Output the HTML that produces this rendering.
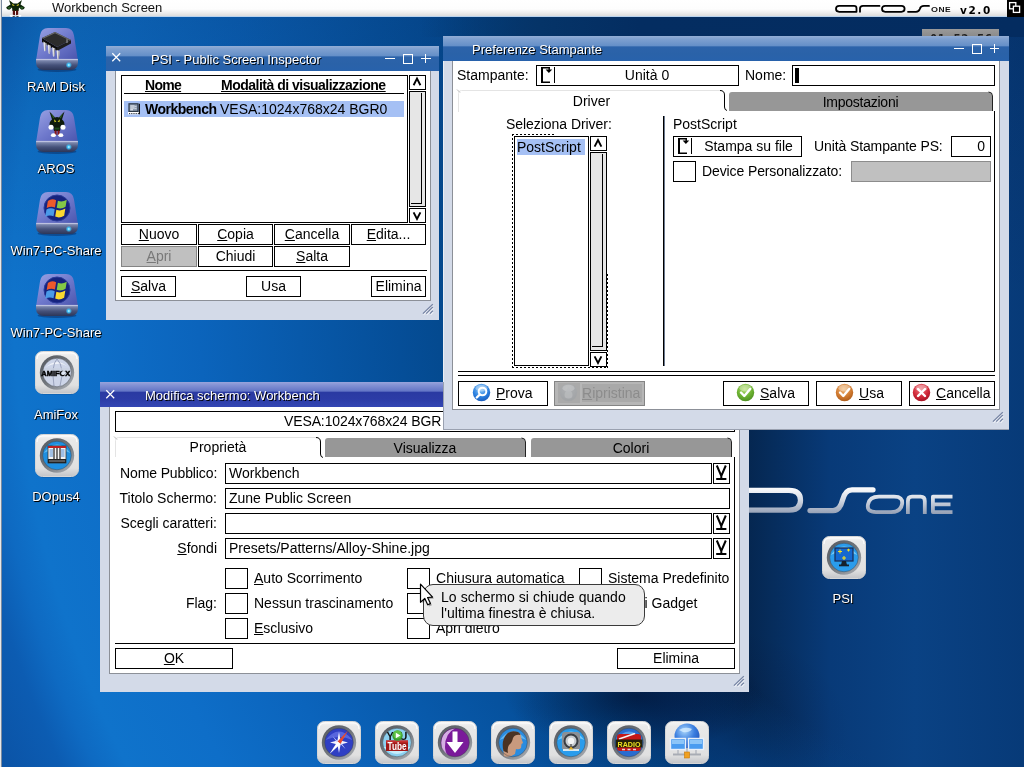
<!DOCTYPE html>
<html lang="it">
<head>
<meta charset="utf-8">
<title>Workbench Screen</title>
<style>
html,body{margin:0;padding:0;}
body{width:1024px;height:767px;overflow:hidden;position:relative;background:#0d4c9c;font-family:"Liberation Sans",sans-serif;font-size:14px;color:#000;line-height:16px;}
.a{position:absolute;box-sizing:border-box;}
.t{position:absolute;white-space:nowrap;line-height:16px;height:16px;}
.c{text-align:center;}
.r{text-align:right;}
u{text-decoration:underline;text-underline-offset:1px;text-decoration-thickness:1px;}
#bg{left:0;top:0;width:1024px;height:767px;
 background:radial-gradient(circle at 1056px 291px,rgba(7,53,110,0) 500px,#063f80 565px,#044a90 619px,#054e98 659px,#0859aa 758px,#0b64bc 858px,#0e6ec8 958px,#0f73cb 1043px,#0e6ac2 1072px,#0c5cb2 1102px,#0b52a4 1165px),
 linear-gradient(90deg,#093a78 380px,#083470 560px,#05264f 745px,#083a78 830px,#0a4284 915px,#073a78 1024px);}
#bgshade{left:0;top:0;width:1024px;height:767px;background:linear-gradient(90deg,rgba(5,52,104,0) 420px,#053468 540px,#042d61 640px,#042c60 1024px) 0 0/1024px 37px no-repeat,radial-gradient(ellipse 130px 55px at 635px 696px,rgba(0,6,30,0.55),rgba(0,6,30,0) 100%),radial-gradient(ellipse 170px 110px at 680px 730px,rgba(0,8,36,0.25),rgba(0,8,36,0) 100%),linear-gradient(180deg,rgba(0,16,50,0.17) 17px,rgba(0,16,50,0.09) 120px,rgba(0,16,50,0.0) 300px);}
#topbar{left:0;top:0;width:1007px;height:17px;background:linear-gradient(180deg,#ffffff 0,#fdfdfd 9px,#ececec 13px,#dcdcdc 16px,#b9d3ee 16px,#b9d3ee 17px);}
#topbar .t{font-size:13px;left:52px;top:0px;color:#111;}
#depth{left:1007px;top:0;width:17px;height:17px;background:#000;}
/* windows */
.win{background:#d3dae8;}
.tb{background:linear-gradient(180deg,#93aed6 0,#7ea0d0 3px,#6690c8 9.5px,#2c63aa 11px,#2a62a8 18px,#2862ac 25px);}
.tb.act{background:linear-gradient(180deg,#98a4dc 0,#8492d4 3px,#6476c6 9px,#2a3aa2 10.5px,#2c3ca6 17px,#3346b4 25px);}
.tt{position:absolute;white-space:nowrap;font-size:13px;color:#fff;text-shadow:1px 1px 0 #000;line-height:16px;top:4px;}
.cont{background:#fff;}
.b{position:absolute;box-sizing:border-box;border:1px solid #000;background:#fff;text-align:center;white-space:nowrap;line-height:16px;}
.dis{background:#c0c0c0;border-color:#848484;color:#787878;}
.hl{position:absolute;height:1px;background:#000;}
.vl{position:absolute;width:1px;background:#000;}
.g{position:absolute;}
.lbl{position:absolute;white-space:nowrap;color:#fff;font-size:13px;line-height:16px;text-align:center;text-shadow:1px 1px 0 #000,0 0 2px rgba(0,0,0,.6);}
</style>
</head>
<body>
<div id="root" style="position:absolute;left:0;top:0;width:1024px;height:767px;overflow:hidden;will-change:transform;">
<div id="bg" class="a"></div>
<div id="bgshade" class="a"></div>

<!-- TOPBAR -->
<div id="topbar" class="a"><span class="t">Workbench Screen</span></div>
<div class="a" style="left:0;top:0;width:2px;height:767px;background:linear-gradient(90deg,#e8e8e8 0,#e8e8e8 1px,#7a8aa0 1px,#7a8aa0 2px);"></div>
<svg class="a" style="left:5px;top:0px;" width="22" height="18" viewBox="0 0 22 18">
<path d="M4 0L8.5 3.5H12.5L17 0L15.5 4.5L19.8 7.2Q19.6 10 16.2 9.6L14 7.6L13.6 11H7.4L7 7.6L4.8 9.6Q1.4 10 1.2 7.2L5.5 4.5Z" fill="#0c2409"/>
<path d="M6.8 3.4L9.8 5.6L7.8 5.9ZM14.2 3.4L11.2 5.6L13.2 5.9Z" fill="#c8c030"/>
<ellipse cx="10.5" cy="0.5" rx="2" ry="1.1" fill="#fff"/>
<ellipse cx="4.2" cy="7.8" rx="1.6" ry="1" fill="#2a5c26"/><ellipse cx="16.8" cy="7.8" rx="1.6" ry="1" fill="#2a5c26"/>
<rect x="7.8" y="10.5" width="2.2" height="5" fill="#5a1010"/><rect x="11" y="10.5" width="2.2" height="5" fill="#5a1010"/>
<ellipse cx="7.3" cy="15.8" rx="2.8" ry="1.1" fill="#fff"/><ellipse cx="13.7" cy="15.8" rx="2.8" ry="1.1" fill="#fff"/>
<path d="M7.6 16.4H9.8M11.4 16.4H13.6" stroke="#222" stroke-width="0.9"/>
</svg>
<svg class="a" style="left:832px;top:2px;" width="100" height="14" viewBox="0 0 100 14">
<g fill="none" stroke="#000" stroke-width="1.8" stroke-linecap="round" stroke-linejoin="round">
<path d="M24.5 9.8V6.2Q24.5 3.9 22 3.9H7.2Q4 3.9 4 6.85Q4 9.8 7.2 9.8H24.5"/>
<path d="M28 9.8V6.6Q28 3.9 31 3.9H47.5"/>
<path d="M53.2 3.9H69.4Q72.6 3.9 72.6 6.85Q72.6 9.8 69.4 9.8H53.2Q50 9.8 50 6.85Q50 3.9 53.2 3.9Z"/>
<path d="M76 9.8H84Q87 9.8 87.8 7Q88.6 3.9 92 3.9H97"/>
</g></svg>
<span class="t" style="left:931px;top:4px;font-size:8px;font-weight:bold;line-height:12px;height:12px;letter-spacing:0.4px;color:#111;transform:scaleX(1.12);transform-origin:0 0;">O<span style="font-size:7.5px;">NE</span></span>
<span class="t" style="left:960px;top:2px;font-family:'DejaVu Sans','Liberation Sans',sans-serif;font-size:10.5px;font-weight:bold;line-height:16px;color:#000;letter-spacing:1.6px;">v2.0</span>
<div id="depth" class="a"></div>
<svg class="a" style="left:1007px;top:0px;" width="17" height="17" viewBox="0 0 17 17"><rect x="2.6" y="2.6" width="6.2" height="6.2" fill="#000" stroke="#fff" stroke-width="1.3"/><rect x="6.4" y="6.2" width="6.2" height="6.2" fill="#000" stroke="#fff" stroke-width="1.3"/></svg>

<!--ICONS-->
<svg class="a" style="left:34px;top:27px;" width="46" height="46" viewBox="0 0 46 46">
<defs><linearGradient id="dg1" x1="0" y1="0" x2="1" y2="1"><stop offset="0" stop-color="#9aa2e4"/><stop offset="0.5" stop-color="#6f79cc"/><stop offset="1" stop-color="#4a55ae"/></linearGradient>
<linearGradient id="db2" x1="0" y1="0" x2="0" y2="1"><stop offset="0" stop-color="#aab2d4"/><stop offset="0.2" stop-color="#7480a6"/><stop offset="0.55" stop-color="#46527a"/><stop offset="1" stop-color="#2c3658"/></linearGradient>
<radialGradient id="dl3"><stop offset="0" stop-color="#e0ffff"/><stop offset="0.4" stop-color="#40c8ff"/><stop offset="1" stop-color="#40c8ff" stop-opacity="0"/></radialGradient></defs>
<ellipse cx="23" cy="42.6" rx="19.5" ry="2.4" fill="#0a2a60" opacity="0.5"/>
<path d="M2.2 32.5L6 8.5Q7 1 14 1H32Q39 1 40 8.5L43.8 32.5Z" fill="url(#dg1)"/>
<path d="M2 32H44V35Q44 43 36 43H10Q2 43 2 35Z" fill="url(#db2)"/><path d="M2.3 32.4H43.7" stroke="#c4cae4" stroke-width="0.9"/>
<circle cx="34.8" cy="38" r="3.2" fill="url(#dl3)"/>
<path d="M8 11L23 20V24L8 15Z" fill="#0c0c0c"/><path d="M23 20L37 13V16.5L23 24Z" fill="#1e1e1e"/><path d="M9.3 14.6L12.5 16.4L11.6 23.6Q10.8 25.2 10.1 23.6Z" fill="#e4e4e8"/><path d="M11.3 15.8L12.5 16.4L11.6 23.6L11.0 24.2Z" fill="#8a8a94"/><path d="M13.7 17.3L16.9 19.1L16.0 26.3Q15.2 27.9 14.5 26.3Z" fill="#e4e4e8"/><path d="M15.7 18.5L16.9 19.1L16.0 26.3L15.4 26.9Z" fill="#8a8a94"/><path d="M18.1 20.0L21.3 21.8L20.4 29.0Q19.6 30.6 18.9 29.0Z" fill="#e4e4e8"/><path d="M20.1 21.2L21.3 21.8L20.4 29.0L19.8 29.6Z" fill="#8a8a94"/><path d="M22.5 22.7L25.7 24.5L24.8 31.7Q24.0 33.3 23.3 31.7Z" fill="#e4e4e8"/><path d="M24.5 23.9L25.7 24.5L24.8 31.7L24.2 32.3Z" fill="#8a8a94"/><path d="M8 11L21 5L37 13L23 20Z" fill="#2c2c2c"/><path d="M21 5L37 13L36 13.6L21 6.2L9.5 11.5L8 11Z" fill="#6a6a6a"/><path d="M33 12.2V16" stroke="#c8c8c8" stroke-width="0.8"/>
</svg>
<span class="lbl" style="left:-4px;top:79px;width:120px;">RAM Disk</span>
<svg class="a" style="left:34px;top:109px;" width="46" height="46" viewBox="0 0 46 46">
<defs><linearGradient id="dg4" x1="0" y1="0" x2="1" y2="1"><stop offset="0" stop-color="#9aa2e4"/><stop offset="0.5" stop-color="#6f79cc"/><stop offset="1" stop-color="#4a55ae"/></linearGradient>
<linearGradient id="db5" x1="0" y1="0" x2="0" y2="1"><stop offset="0" stop-color="#aab2d4"/><stop offset="0.2" stop-color="#7480a6"/><stop offset="0.55" stop-color="#46527a"/><stop offset="1" stop-color="#2c3658"/></linearGradient>
<radialGradient id="dl6"><stop offset="0" stop-color="#e0ffff"/><stop offset="0.4" stop-color="#40c8ff"/><stop offset="1" stop-color="#40c8ff" stop-opacity="0"/></radialGradient></defs>
<ellipse cx="23" cy="42.6" rx="19.5" ry="2.4" fill="#0a2a60" opacity="0.5"/>
<path d="M2.2 32.5L6 8.5Q7 1 14 1H32Q39 1 40 8.5L43.8 32.5Z" fill="url(#dg4)"/>
<path d="M2 32H44V35Q44 43 36 43H10Q2 43 2 35Z" fill="url(#db5)"/><path d="M2.3 32.4H43.7" stroke="#c4cae4" stroke-width="0.9"/>
<circle cx="34.8" cy="38" r="3.2" fill="url(#dl6)"/>
<path d="M15.5 2.5L21 8.5Q23 7.5 25 8.5L30.5 2.5L28 10.5Q31.5 13 30 17.5L27 16L26 22H20L19 16L16 17.5Q14.5 13 18 10.5Z" fill="#0e1a0c"/>
<path d="M16.8 4L20.6 8.2L19.2 9.6ZM29.2 4L25.4 8.2L26.8 9.6Z" fill="#2c5a24"/>
<path d="M20 10.2L22.4 12.6L20.6 13.2ZM26 10.2L23.6 12.6L25.4 13.2Z" fill="#d8d028"/>
<rect x="20.5" y="18.6" width="5" height="2" fill="#1e4a1c"/>
<circle cx="17" cy="18.3" r="2.5" fill="#fff"/><circle cx="29" cy="18.3" r="2.5" fill="#fff"/>
<rect x="20.6" y="21.5" width="2" height="4.5" fill="#8a1414"/><rect x="23.6" y="21.5" width="2" height="4.5" fill="#8a1414"/>
<ellipse cx="19.4" cy="26.2" rx="2.5" ry="1.9" fill="#fff"/><ellipse cx="26.8" cy="26.2" rx="2.5" ry="1.9" fill="#fff"/>
</svg>
<span class="lbl" style="left:-4px;top:161px;width:120px;">AROS</span>
<svg class="a" style="left:34px;top:191px;" width="46" height="46" viewBox="0 0 46 46">
<defs><linearGradient id="dg7" x1="0" y1="0" x2="1" y2="1"><stop offset="0" stop-color="#9aa2e4"/><stop offset="0.5" stop-color="#6f79cc"/><stop offset="1" stop-color="#4a55ae"/></linearGradient>
<linearGradient id="db8" x1="0" y1="0" x2="0" y2="1"><stop offset="0" stop-color="#aab2d4"/><stop offset="0.2" stop-color="#7480a6"/><stop offset="0.55" stop-color="#46527a"/><stop offset="1" stop-color="#2c3658"/></linearGradient>
<radialGradient id="dl9"><stop offset="0" stop-color="#e0ffff"/><stop offset="0.4" stop-color="#40c8ff"/><stop offset="1" stop-color="#40c8ff" stop-opacity="0"/></radialGradient></defs>
<ellipse cx="23" cy="42.6" rx="19.5" ry="2.4" fill="#0a2a60" opacity="0.5"/>
<path d="M2.2 32.5L6 8.5Q7 1 14 1H32Q39 1 40 8.5L43.8 32.5Z" fill="url(#dg7)"/>
<path d="M2 32H44V35Q44 43 36 43H10Q2 43 2 35Z" fill="url(#db8)"/><path d="M2.3 32.4H43.7" stroke="#c4cae4" stroke-width="0.9"/>
<circle cx="34.8" cy="38" r="3.2" fill="url(#dl9)"/>
<circle cx="23" cy="17" r="13" fill="#16237e"/><circle cx="23" cy="17" r="13" fill="none" stroke="#2a3a9a" stroke-width="1"/>
<g transform="translate(22.6 17) scale(1.18) translate(-22.4 -17)"><path d="M15 11Q18.5 8.5 22 10.5L21 16.5Q17.5 15 14 17Z" fill="#ee5a2c"/>
<path d="M23.5 10.8Q27 12.5 31 10L30 16Q26.5 18.5 22.5 16.8Z" fill="#84c846"/>
<path d="M13.8 18.3Q17.3 16.3 20.8 18L19.8 24Q16.3 22.3 12.8 24.5Z" fill="#4a9ae8"/>
<path d="M22.2 18.4Q26 20 29.8 17.5L28.8 23.5Q25 26 21.2 24.3Z" fill="#fad830"/></g>
</svg>
<span class="lbl" style="left:-4px;top:243px;width:120px;">Win7-PC-Share</span>
<svg class="a" style="left:34px;top:273px;" width="46" height="46" viewBox="0 0 46 46">
<defs><linearGradient id="dg10" x1="0" y1="0" x2="1" y2="1"><stop offset="0" stop-color="#9aa2e4"/><stop offset="0.5" stop-color="#6f79cc"/><stop offset="1" stop-color="#4a55ae"/></linearGradient>
<linearGradient id="db11" x1="0" y1="0" x2="0" y2="1"><stop offset="0" stop-color="#aab2d4"/><stop offset="0.2" stop-color="#7480a6"/><stop offset="0.55" stop-color="#46527a"/><stop offset="1" stop-color="#2c3658"/></linearGradient>
<radialGradient id="dl12"><stop offset="0" stop-color="#e0ffff"/><stop offset="0.4" stop-color="#40c8ff"/><stop offset="1" stop-color="#40c8ff" stop-opacity="0"/></radialGradient></defs>
<ellipse cx="23" cy="42.6" rx="19.5" ry="2.4" fill="#0a2a60" opacity="0.5"/>
<path d="M2.2 32.5L6 8.5Q7 1 14 1H32Q39 1 40 8.5L43.8 32.5Z" fill="url(#dg10)"/>
<path d="M2 32H44V35Q44 43 36 43H10Q2 43 2 35Z" fill="url(#db11)"/><path d="M2.3 32.4H43.7" stroke="#c4cae4" stroke-width="0.9"/>
<circle cx="34.8" cy="38" r="3.2" fill="url(#dl12)"/>
<circle cx="23" cy="17" r="13" fill="#16237e"/><circle cx="23" cy="17" r="13" fill="none" stroke="#2a3a9a" stroke-width="1"/>
<g transform="translate(22.6 17) scale(1.18) translate(-22.4 -17)"><path d="M15 11Q18.5 8.5 22 10.5L21 16.5Q17.5 15 14 17Z" fill="#ee5a2c"/>
<path d="M23.5 10.8Q27 12.5 31 10L30 16Q26.5 18.5 22.5 16.8Z" fill="#84c846"/>
<path d="M13.8 18.3Q17.3 16.3 20.8 18L19.8 24Q16.3 22.3 12.8 24.5Z" fill="#4a9ae8"/>
<path d="M22.2 18.4Q26 20 29.8 17.5L28.8 23.5Q25 26 21.2 24.3Z" fill="#fad830"/></g>
</svg>
<span class="lbl" style="left:-4px;top:325px;width:120px;">Win7-PC-Share</span>
<svg class="a" style="left:35px;top:351px;" width="44" height="44" viewBox="0 0 44 44">
<defs><linearGradient id="tg13" x1="0" y1="0" x2="0" y2="1"><stop offset="0" stop-color="#f6f6f6"/><stop offset="0.12" stop-color="#e9e9e9"/><stop offset="0.8" stop-color="#e0e0e0"/><stop offset="1" stop-color="#c2c4c8"/></linearGradient>
<linearGradient id="rg14" x1="0.15" y1="0.1" x2="0.85" y2="0.9"><stop offset="0" stop-color="#5c6066"/><stop offset="0.5" stop-color="#70757b"/><stop offset="1" stop-color="#a2a6ac"/></linearGradient></defs>
<rect x="1" y="1.6" width="42.4" height="42" rx="7" ry="7" fill="#0a2a5c" opacity="0.35"/>
<rect x="0.5" y="0.5" width="43" height="42" rx="7" ry="7" fill="url(#tg13)" stroke="#d6d6d6"/>
<path d="M2 8Q2 2 8 2H36Q42 2 42 8" stroke="#ffffff" stroke-width="1.2" fill="none" opacity="0.9"/>
<circle cx="22" cy="21.5" r="17.2" fill="url(#rg14)"/>
<circle cx="22" cy="21.5" r="14.3" fill="#cdd5e8"/><path d="M10 17Q22 5 34 17Q28 12 22 13Q15 13 10 17Z" fill="#eef1f8"/>
<path d="M22 8Q16 14 19 35M22 8Q30 16 25 35" stroke="#8e97b2" stroke-width="0.8" fill="none"/>
<rect x="9" y="17" width="26" height="8" fill="#c9d0e0" opacity="0.7"/>
<text x="20.8" y="24.8" font-family="Liberation Sans, sans-serif" font-weight="bold" font-size="8" text-anchor="middle" fill="#000" stroke="#000" stroke-width="0.5" textLength="29" lengthAdjust="spacingAndGlyphs">AMIFOX</text><circle cx="28.4" cy="21.9" r="2" fill="#dfe6f4"/>
<circle cx="22" cy="21.5" r="14.3" fill="none" stroke="#3a3e44" stroke-width="0.7" opacity="0.6"/>
</svg>
<span class="lbl" style="left:-4px;top:407px;width:120px;">AmiFox</span>
<svg class="a" style="left:35px;top:434px;" width="44" height="44" viewBox="0 0 44 44">
<defs><linearGradient id="tg15" x1="0" y1="0" x2="0" y2="1"><stop offset="0" stop-color="#f6f6f6"/><stop offset="0.12" stop-color="#e9e9e9"/><stop offset="0.8" stop-color="#e0e0e0"/><stop offset="1" stop-color="#c2c4c8"/></linearGradient>
<linearGradient id="rg16" x1="0.15" y1="0.1" x2="0.85" y2="0.9"><stop offset="0" stop-color="#5c6066"/><stop offset="0.5" stop-color="#70757b"/><stop offset="1" stop-color="#a2a6ac"/></linearGradient></defs>
<rect x="1" y="1.6" width="42.4" height="42" rx="7" ry="7" fill="#0a2a5c" opacity="0.35"/>
<rect x="0.5" y="0.5" width="43" height="42" rx="7" ry="7" fill="url(#tg15)" stroke="#d6d6d6"/>
<path d="M2 8Q2 2 8 2H36Q42 2 42 8" stroke="#ffffff" stroke-width="1.2" fill="none" opacity="0.9"/>
<circle cx="22" cy="21.5" r="17.2" fill="url(#rg16)"/>
<circle cx="22" cy="21.5" r="14.3" fill="#1f8fe0"/><path d="M8.5 19Q22 2 35.5 19Q22 12 8.5 19Z" fill="#6cc4f4" opacity="0.8"/>
<rect x="13" y="12" width="18" height="17" fill="#f4f4f4" stroke="#333" stroke-width="0.8"/><rect x="13" y="12" width="18" height="2" fill="#c02020"/>
<path d="M19 14V25M22 14V25M25 14V25" stroke="#222" stroke-width="1.2"/><path d="M14.5 16H18M14.5 18H18M14.5 20H18M14.5 22H18M26 16H29.5M26 18H29.5M26 20H29.5M26 22H29.5" stroke="#3a80d0" stroke-width="0.9"/>
<rect x="13" y="25" width="18" height="4" fill="#222"/><path d="M14.5 27H29.5" stroke="#fff" stroke-width="1" stroke-dasharray="1 1"/>
<circle cx="22" cy="21.5" r="14.3" fill="none" stroke="#3a3e44" stroke-width="0.7" opacity="0.6"/>
</svg>
<span class="lbl" style="left:-4px;top:489px;width:120px;">DOpus4</span>
<svg class="a" style="left:822px;top:536px;" width="44" height="44" viewBox="0 0 44 44">
<defs><linearGradient id="tg17" x1="0" y1="0" x2="0" y2="1"><stop offset="0" stop-color="#f6f6f6"/><stop offset="0.12" stop-color="#e9e9e9"/><stop offset="0.8" stop-color="#e0e0e0"/><stop offset="1" stop-color="#c2c4c8"/></linearGradient>
<linearGradient id="rg18" x1="0.15" y1="0.1" x2="0.85" y2="0.9"><stop offset="0" stop-color="#5c6066"/><stop offset="0.5" stop-color="#70757b"/><stop offset="1" stop-color="#a2a6ac"/></linearGradient></defs>
<rect x="1" y="1.6" width="42.4" height="42" rx="7" ry="7" fill="#0a2a5c" opacity="0.35"/>
<rect x="0.5" y="0.5" width="43" height="42" rx="7" ry="7" fill="url(#tg17)" stroke="#d6d6d6"/>
<path d="M2 8Q2 2 8 2H36Q42 2 42 8" stroke="#ffffff" stroke-width="1.2" fill="none" opacity="0.9"/>
<circle cx="22" cy="21.5" r="17.2" fill="url(#rg18)"/>
<circle cx="22" cy="21.5" r="14.3" fill="#2a9cec"/><path d="M8.5 19Q22 2 35.5 19Q22 12 8.5 19Z" fill="#8ad4fa" opacity="0.8"/>
<rect x="13" y="12" width="18" height="13" fill="#1468d0" stroke="#1a2a50" stroke-width="1.2"/>
<path d="M19 29H25L24 25H20Z" fill="#16202c"/><rect x="17" y="28.5" width="10" height="1.8" fill="#16202c"/>
<path d="M16 15.5H20M18 13.5V17.5M25 14H28M26.5 12.7V15.5M20 22H24M22 20V24" stroke="#f4e020" stroke-width="1.1"/>
<circle cx="22" cy="21.5" r="14.3" fill="none" stroke="#3a3e44" stroke-width="0.7" opacity="0.6"/>
</svg>
<span class="lbl" style="left:783px;top:591px;width:120px;">PSI</span>

<!--CLOCK-->
<div class="a" style="left:922px;top:29px;width:77px;height:14px;background:linear-gradient(180deg,#9a9a9a,#7c7c7c);"></div>
<span class="t" style="left:930px;top:31px;font-family:'DejaVu Sans Mono','Liberation Mono',monospace;font-weight:bold;font-size:12px;color:#222;letter-spacing:0.6px;">01:52:56</span>
<!--LOGO-->
<svg class="a" style="left:740px;top:481px;" width="220" height="40" viewBox="0 0 220 40">
<defs><linearGradient id="lg1" gradientUnits="userSpaceOnUse" x1="0" y1="6" x2="0" y2="34"><stop offset="0" stop-color="#ffffff"/><stop offset="0.45" stop-color="#d4dae4"/><stop offset="1" stop-color="#8e9ab0"/></linearGradient></defs>
<g fill="none" stroke="url(#lg1)" stroke-linecap="round" stroke-linejoin="round">
<path d="M-40 9.4H49Q60.5 9.4 60.5 19.3Q60.5 29.2 49 29.2H-40" stroke-width="5.3"/>
<path d="M70 29.6H93Q100 29.6 102.5 19.2Q105 8.8 112 8.8H133" stroke-width="5.3"/>
<path d="M139 15.7H154Q163.5 15.7 162 23.4Q160.5 31.1 151 31.1H136Q126.5 31.1 128 23.4Q129.5 15.7 139 15.7Z" stroke-width="3.8"/>
<path d="M167.9 33V20Q167.9 15.7 172 15.7H180.6Q184.8 15.7 184.8 20V33" stroke-width="3.8" stroke-linecap="butt"/>
<path d="M212.5 15.7H192.9V31.1H212.5M192.9 23.4H210.5" stroke-width="3.8" stroke-linecap="butt"/>
</g></svg>

<!--PSI-->
<div class="a win" style="left:106px;top:47px;width:333px;height:273px;"></div>
<div class="a tb" style="left:106px;top:46px;width:333px;height:25px;"></div>
<svg class="a" style="left:106px;top:47px;" width="334" height="24" viewBox="0 0 334 24"><g stroke="#fff" stroke-width="1" fill="none" shape-rendering="crispEdges"><path d="M6.3 6.3L14.2 14.2M14.2 6.3L6.3 14.2" shape-rendering="auto" stroke-width="1.25"/><path d="M279 11.5H289M297.5 7.5H306.5V16.5H297.5ZM315 11.5H325M319.5 7V16"/></g></svg>
<span class="tt" style="left:151px;top:52px;">PSI - Public Screen Inspector</span>
<div class="a cont" style="left:115px;top:71px;width:316px;height:230px;border-left:1px solid #8c9098;border-bottom:1px solid #8c9098;border-right:1px solid #8c9098;"></div>
<div class="a" style="left:121px;top:75px;width:287px;height:148px;border:1px solid #000;background:#fff;"></div>
<span class="t" style="left:145px;top:77px;font-weight:bold;letter-spacing:-0.7px;"><u>Nome</u></span>
<span class="t" style="left:221px;top:77px;font-weight:bold;letter-spacing:-0.5px;"><u>Modalità di visualizzazione</u></span>
<div class="hl" style="left:124px;top:93px;width:280px;"></div>
<div class="a" style="left:124px;top:101px;width:280px;height:16px;background:#a5c0f4;"></div>
<svg class="a" style="left:128px;top:103px;" width="13" height="12" viewBox="0 0 13 12"><rect x="0" y="9" width="11" height="2.4" fill="#fff"/><rect x="1" y="0.8" width="9" height="7.6" fill="#8e9cae" stroke="#2c3846" stroke-width="1.2"/><path d="M2.3 3H6.5M2.3 5H6.5M2.3 6.8H5" stroke="#f4f6fa" stroke-width="1"/><path d="M6.5 3.6H8.6M6.5 5.6H8.6" stroke="#dfe5ee" stroke-width="0.8"/><path d="M11.4 0.8V11.2" stroke="#0a0a0a" stroke-width="1.1"/><path d="M1 10.6H11" stroke="#1e2630" stroke-width="1" stroke-dasharray="1.2 1"/></svg>
<span class="t" style="left:145px;top:101px;font-weight:bold;letter-spacing:-0.5px;">Workbench</span>
<span class="t" style="left:220px;top:101px;">VESA:1024x768x24 BGR0</span>
<!-- psi scrollbar -->
<div class="b" style="left:409px;top:75px;width:17px;height:15px;"></div>
<svg class="a" style="left:409px;top:75px;" width="17" height="15"><path d="M4.6 10.2L8 3.6L11.4 10.2" stroke="#000" stroke-width="1.9" fill="none"/></svg>
<div class="b" style="left:409px;top:91px;width:17px;height:116px;background:#e6e6e6;"></div>
<div class="a" style="left:411px;top:93px;width:11px;height:111px;border-right:1px solid #000;border-bottom:1px solid #000;"></div>
<div class="b" style="left:409px;top:208px;width:17px;height:15px;"></div>
<svg class="a" style="left:409px;top:208px;" width="17" height="15"><path d="M4.6 4.4L8 11L11.4 4.4" stroke="#000" stroke-width="1.9" fill="none"/></svg>
<!-- psi buttons -->
<div class="b" style="left:121px;top:224px;width:76px;height:21px;line-height:19px;"><u>N</u>uovo</div>
<div class="b" style="left:198px;top:224px;width:75px;height:21px;line-height:19px;"><u>C</u>opia</div>
<div class="b" style="left:274px;top:224px;width:76px;height:21px;line-height:19px;"><u>C</u>ancella</div>
<div class="b" style="left:351px;top:224px;width:75px;height:21px;line-height:19px;"><u>E</u>dita...</div>
<div class="b dis" style="left:121px;top:246px;width:76px;height:21px;line-height:19px;"><u>A</u>pri</div>
<div class="b" style="left:198px;top:246px;width:75px;height:21px;line-height:19px;">Chiudi</div>
<div class="b" style="left:274px;top:246px;width:76px;height:21px;line-height:19px;"><u>S</u>alta</div>
<div class="hl" style="left:120px;top:270px;width:307px;"></div>
<div class="b" style="left:121px;top:276px;width:55px;height:21px;line-height:19px;"><u>S</u>alva</div>
<div class="b" style="left:246px;top:276px;width:55px;height:21px;line-height:19px;">Usa</div>
<div class="b" style="left:371px;top:276px;width:55px;height:21px;line-height:19px;">Elimina</div>
<svg class="a" style="left:420px;top:303px;" width="14" height="14"><path d="M3.6 11.6L13.2 2.2M6.9 11.6L13.2 5M10.7 11.6L13.2 8.8" stroke="#f4f6fa" stroke-width="1.2"/><path d="M2.9 10.6L12.8 1.2M6.2 10.6L12.8 4M10 10.6L12.8 7.8" stroke="#7684a4" stroke-width="1.3"/></svg>

<!--MOD-->
<div class="a win" style="left:100px;top:382px;width:649px;height:310px;"></div>
<div class="a tb act" style="left:100px;top:382px;width:649px;height:25px;"></div>
<svg class="a" style="left:100px;top:384px;" width="40" height="24" viewBox="0 0 40 24"><path d="M6.3 6.3L14.2 14.2M14.2 6.3L6.3 14.2" stroke="#fff" stroke-width="1.25" fill="none"/></svg>
<span class="tt" style="left:145px;top:388px;">Modifica schermo: Workbench</span>
<div class="a cont" style="left:109px;top:407px;width:631px;height:267px;border-left:1px solid #8c9098;border-bottom:1px solid #8c9098;border-right:1px solid #8c9098;"></div>
<div class="b" style="left:115px;top:411px;width:620px;height:21px;line-height:19px;text-align:left;padding-left:168px;letter-spacing:-0.12px;">VESA:1024x768x24 BGR</div>
<!-- tabs -->
<svg class="a" style="left:113px;top:435px;" width="626" height="212" viewBox="0 0 626 212">
 <path d="M2.5 22V5.5Q2.5 2.5 5.5 2.5H205" stroke="#e4e4e4" fill="none"/>
 <path d="M1 1.5L4 4.5" stroke="#bbb" fill="none"/>
 <path d="M203 2.5Q207.5 2.5 207.5 7V19Q207.5 22 210 22.5" stroke="#000" fill="none"/>
 <path d="M212 22V6Q212 3 215 3H408Q412 3 412 7V22Z" fill="#979797"/>
 <path d="M408.5 3Q412.5 3 412.5 7V22" stroke="#222" fill="none"/>
 <path d="M418 22V6Q418 3 421 3H614Q618 3 618 7V22Z" fill="#979797"/>
 <path d="M614.5 3Q618.5 3 618.5 7V22" stroke="#222" fill="none"/>
 <path d="M621.5 22V208.5H2" stroke="#000" fill="none"/>
</svg>
<span class="t c" style="left:116px;top:439px;width:204px;">Proprietà</span>
<span class="t c" style="left:325px;top:440px;width:200px;">Visualizza</span>
<span class="t c" style="left:531px;top:440px;width:200px;">Colori</span>
<!-- fields -->
<span class="t" style="left:120px;top:465px;letter-spacing:-0.12px;">Nome Pubblico:</span>
<div class="b" style="left:225px;top:463px;width:487px;height:21px;line-height:19px;text-align:left;padding-left:3px;">Workbench</div>
<div class="b" style="left:713px;top:463px;width:17px;height:21px;"></div>
<span class="t r" style="left:116px;top:490px;width:101px;">Titolo Schermo:</span>
<div class="b" style="left:225px;top:488px;width:505px;height:21px;line-height:19px;text-align:left;padding-left:3px;">Zune Public Screen</div>
<span class="t r" style="left:116px;top:515px;width:101px;">Scegli caratteri:</span>
<div class="b" style="left:225px;top:513px;width:487px;height:21px;"></div>
<div class="b" style="left:713px;top:513px;width:17px;height:21px;"></div>
<span class="t r" style="left:116px;top:540px;width:101px;"><u>S</u>fondi</span>
<div class="b" style="left:225px;top:538px;width:487px;height:21px;line-height:19px;text-align:left;padding-left:3px;">Presets/Patterns/Alloy-Shine.jpg</div>
<div class="b" style="left:713px;top:538px;width:17px;height:21px;"></div>
<svg class="a" style="left:713px;top:463px;" width="17" height="96" viewBox="0 0 17 96"><g stroke="#000" stroke-width="2" fill="none"><path d="M3.8 2.5L8.3 13L12.8 2.5M8.3 11V15.5"/><path d="M3.2 16H13.4" stroke-width="2"/><path d="M3.8 52.5L8.3 63L12.8 52.5M8.3 61V65.5"/><path d="M3.2 66H13.4" stroke-width="2"/><path d="M3.8 77.5L8.3 88L12.8 77.5M8.3 86V90.5"/><path d="M3.2 91H13.4" stroke-width="2"/></g></svg>
<!-- flags -->
<span class="t r" style="left:116px;top:595px;width:101px;">Flag:</span>
<div class="b" style="left:225px;top:568px;width:23px;height:21px;"></div>
<div class="b" style="left:225px;top:593px;width:23px;height:21px;"></div>
<div class="b" style="left:225px;top:618px;width:23px;height:21px;"></div>
<span class="t" style="left:254px;top:570px;"><u>A</u>uto Scorrimento</span>
<span class="t" style="left:254px;top:595px;">Nessun trascinamento</span>
<span class="t" style="left:254px;top:620px;"><u>E</u>sclusivo</span>
<div class="b" style="left:407px;top:568px;width:23px;height:21px;"></div>
<div class="b" style="left:407px;top:593px;width:23px;height:21px;"></div>
<div class="b" style="left:407px;top:618px;width:23px;height:21px;"></div>
<span class="t" style="left:436px;top:570px;"><u>C</u>hiusura automatica</span>
<span class="t" style="left:436px;top:595px;">Condivisibile</span>
<span class="t" style="left:436px;top:620px;">Apri dietro</span>
<div class="b" style="left:579px;top:568px;width:23px;height:21px;"></div>
<div class="b" style="left:579px;top:593px;width:23px;height:21px;"></div>
<span class="t" style="left:608px;top:570px;">Sistema Predefinito</span>
<span class="t" style="left:608px;top:595px;">Chiudi Gadget</span>
<div class="b" style="left:115px;top:648px;width:118px;height:21px;line-height:19px;"><u>O</u>K</div>
<div class="b" style="left:617px;top:648px;width:118px;height:21px;line-height:19px;">Elimina</div>
<svg class="a" style="left:731px;top:675px;" width="14" height="14"><path d="M3.6 11.6L13.2 2.2M6.9 11.6L13.2 5M10.7 11.6L13.2 8.8" stroke="#f4f6fa" stroke-width="1.2"/><path d="M2.9 10.6L12.8 1.2M6.2 10.6L12.8 4M10 10.6L12.8 7.8" stroke="#7684a4" stroke-width="1.3"/></svg>

<!--PREF-->
<div class="a win" style="left:443px;top:37px;width:566px;height:393px;border-left:1px solid #9aa1b0;border-bottom:1px solid #9aa1b0;"></div>
<div class="a" style="left:443px;top:61px;width:1px;height:321px;background:#e9edf4;"></div>
<div class="a tb" style="left:443px;top:36px;width:566px;height:25px;"></div>
<svg class="a" style="left:943px;top:37px;" width="65" height="24" viewBox="0 0 65 24"><g stroke="#fff" stroke-width="1" fill="none" shape-rendering="crispEdges"><path d="M11 11.5H21M29.5 7.5H38.5V16.5H29.5ZM47 11.5H56M51.5 7V16"/></g></svg>
<span class="tt" style="left:472px;top:42px;">Preferenze Stampante</span>
<div class="a cont" style="left:452px;top:61px;width:548px;height:349px;border-left:1px solid #8c9098;border-bottom:1px solid #8c9098;border-right:1px solid #8c9098;"></div>
<span class="t" style="left:457px;top:67px;">Stampante:</span>
<div class="b" style="left:536px;top:65px;width:203px;height:21px;line-height:19px;padding-left:19px;">Unità 0</div>
<svg class="a" style="left:541px;top:67px;" width="16" height="17" viewBox="0 0 16 17"><path d="M0 0H2V16H0ZM0 0H9V1.6H0ZM0 14.4H9V16H0Z" fill="#000"/><path d="M4.6 2.4H11.2L7.9 6Z" fill="#000"/><rect x="7.5" y="1" width="1.4" height="2" fill="#000"/><rect x="13" y="0" width="1" height="16" fill="#000"/></svg>
<span class="t" style="left:745px;top:67px;">Nome:</span>
<div class="b" style="left:792px;top:65px;width:203px;height:21px;"></div>
<div class="a" style="left:795px;top:68px;width:4px;height:15px;background:#000;"></div>
<!-- tabs -->
<svg class="a" style="left:456px;top:88px;" width="542" height="286" viewBox="0 0 542 286">
 <path d="M2.5 24V5.5Q2.5 2.5 5.5 2.5H266" stroke="#e4e4e4" fill="none"/>
 <path d="M1 1.5L4 4.5" stroke="#bbb" fill="none"/>
 <path d="M264 2.5Q268.5 2.5 268.5 7V19Q268.5 22 271 22.5" stroke="#000" fill="none"/>
 <path d="M273 23V7Q273 4 276 4H532Q536 4 536 8V23Z" fill="#979797"/>
 <path d="M532.5 4Q536.5 4 536.5 8V23" stroke="#222" fill="none"/>
 <path d="M538.5 23V283.5H2" stroke="#000" fill="none"/>
</svg>
<span class="t c" style="left:458px;top:93px;width:267px;">Driver</span>
<span class="t c" style="left:729px;top:94px;width:263px;letter-spacing:-0.25px;">Impostazioni</span>
<!-- left -->
<span class="t" style="left:506px;top:116px;letter-spacing:-0.05px;">Seleziona Driver:</span>
<div class="a" style="left:512px;top:134px;width:44px;height:1px;background:repeating-linear-gradient(90deg,#000 0,#000 2px,transparent 2px,transparent 4px);"></div>
<div class="a" style="left:512px;top:134px;width:1px;height:233px;background:repeating-linear-gradient(180deg,#000 0,#000 2px,transparent 2px,transparent 4px);"></div>
<div class="a" style="left:512px;top:367px;width:96px;height:1px;background:repeating-linear-gradient(90deg,#000 0,#000 2px,transparent 2px,transparent 4px);"></div>
<div class="a" style="left:607px;top:274px;width:1px;height:94px;background:repeating-linear-gradient(180deg,#000 0,#000 2px,transparent 2px,transparent 4px);"></div>
<div class="b" style="left:514px;top:136px;width:75px;height:230px;"></div>
<div class="a" style="left:517px;top:139px;width:68px;height:16px;background:#a5c0f4;"></div>
<span class="t" style="left:517px;top:139px;">PostScript</span>
<div class="b" style="left:590px;top:136px;width:17px;height:15px;"></div>
<svg class="a" style="left:590px;top:136px;" width="17" height="15"><path d="M4.6 10.6L8 4L11.4 10.6" stroke="#000" stroke-width="1.9" fill="none"/></svg>
<div class="b" style="left:590px;top:152px;width:17px;height:199px;background:#e6e6e6;"></div>
<div class="a" style="left:592px;top:154px;width:11px;height:193px;border-right:1px solid #000;border-bottom:1px solid #000;"></div>
<div class="b" style="left:590px;top:352px;width:17px;height:15px;"></div>
<svg class="a" style="left:590px;top:352px;" width="17" height="15"><path d="M4.6 4.4L8 11L11.4 4.4" stroke="#000" stroke-width="1.9" fill="none"/></svg>
<div class="a" style="left:663px;top:116px;width:2px;height:250px;background:linear-gradient(90deg,#000 0,#000 1px,#6a788e 1px,#6a788e 2px);"></div>
<!-- right -->
<span class="t" style="left:673px;top:116px;">PostScript</span>
<div class="b" style="left:673px;top:136px;width:129px;height:21px;line-height:19px;padding-left:22px;">Stampa su file</div>
<svg class="a" style="left:678px;top:138px;" width="16" height="17" viewBox="0 0 16 17"><path d="M0 0H2V16H0ZM0 0H9V1.6H0ZM0 14.4H9V16H0Z" fill="#000"/><path d="M4.6 2.4H11.2L7.9 6Z" fill="#000"/><rect x="7.5" y="1" width="1.4" height="2" fill="#000"/><rect x="13" y="0" width="1" height="16" fill="#000"/></svg>
<span class="t" style="left:814px;top:138px;letter-spacing:-0.11px;">Unità Stampante PS:</span>
<div class="b r" style="left:951px;top:136px;width:40px;height:21px;line-height:19px;text-align:right;padding-right:5px;">0</div>
<div class="b" style="left:673px;top:161px;width:23px;height:21px;"></div>
<span class="t" style="left:702px;top:163px;letter-spacing:-0.11px;">Device Personalizzato:</span>
<div class="b" style="left:851px;top:161px;width:140px;height:21px;background:#c0c0c0;border-color:#8c8c8c;"></div>
<!-- bottom -->
<div class="hl" style="left:458px;top:375px;width:537px;"></div>
<div class="b" style="left:458px;top:381px;width:90px;height:25px;line-height:23px;text-align:left;padding-left:37px;"><u>P</u>rova</div>
<div class="b dis" style="left:554px;top:381px;width:91px;height:25px;line-height:23px;text-align:left;padding-left:27px;background:#b6b6b6;"><span style="background:#a9a9a9;padding:1px 2px 1px 0;color:#8c8c8c;"><u>R</u>ipristina</span></div>
<div class="b" style="left:723px;top:381px;width:86px;height:25px;line-height:23px;text-align:left;padding-left:36px;"><u>S</u>alva</div>
<div class="b" style="left:816px;top:381px;width:86px;height:25px;line-height:23px;text-align:left;padding-left:42px;"><u>U</u>sa</div>
<div class="b" style="left:909px;top:381px;width:86px;height:25px;line-height:23px;text-align:left;padding-left:26px;"><u>C</u>ancella</div>
<!--PREFICONS-->
<svg class="a" style="left:472px;top:383px;" width="19" height="19" viewBox="0 0 19 19"><defs><radialGradient id="bg472" cx="0.45" cy="0.3" r="0.75"><stop offset="0" stop-color="#8cc8f8"/><stop offset="0.6" stop-color="#2a80e0"/><stop offset="1" stop-color="#1858b8"/></radialGradient></defs><circle cx="9.5" cy="9.5" r="8.7" fill="url(#bg472)"/><ellipse cx="9.5" cy="5.2" rx="6" ry="3.4" fill="#fff" opacity="0.35"/><circle cx="10.5" cy="8.5" r="3.8" stroke="#fff" stroke-width="2" fill="none"/><path d="M7.8 11.5L4.8 14.5" stroke="#fff" stroke-width="2.4" stroke-linecap="round"/></svg>
<div class="a" style="left:558px;top:383px;width:22px;height:20px;background:#aaaaaa;"></div>
<svg class="a" style="left:559px;top:383px;opacity:0.6;" width="19" height="19" viewBox="0 0 19 19"><defs><radialGradient id="bg559" cx="0.45" cy="0.3" r="0.75"><stop offset="0" stop-color="#b4b8bc"/><stop offset="0.6" stop-color="#a4a8ac"/><stop offset="1" stop-color="#9a9ea2"/></radialGradient></defs><circle cx="9.5" cy="9.5" r="8.7" fill="url(#bg559)"/><ellipse cx="9.5" cy="5.2" rx="6" ry="3.4" fill="#fff" opacity="0.35"/><path d="M9.5 4Q13.5 9.5 13.5 12Q13.5 15.5 9.5 15.5Q5.5 15.5 5.5 12Q5.5 9.5 9.5 4Z" fill="#c4c8cc" opacity="0.8"/></svg>
<svg class="a" style="left:736px;top:383px;" width="19" height="19" viewBox="0 0 19 19"><defs><radialGradient id="bg736" cx="0.45" cy="0.3" r="0.75"><stop offset="0" stop-color="#b4e070"/><stop offset="0.6" stop-color="#6ab030"/><stop offset="1" stop-color="#4a8a20"/></radialGradient></defs><circle cx="9.5" cy="9.5" r="8.7" fill="url(#bg736)"/><ellipse cx="9.5" cy="5.2" rx="6" ry="3.4" fill="#fff" opacity="0.35"/><path d="M5 9.5L8.3 13L14.2 6" stroke="#fff" stroke-width="2.4" fill="none" stroke-linecap="round" stroke-linejoin="round"/></svg>
<svg class="a" style="left:835px;top:383px;" width="19" height="19" viewBox="0 0 19 19"><defs><radialGradient id="bg835" cx="0.45" cy="0.3" r="0.75"><stop offset="0" stop-color="#f0b878"/><stop offset="0.6" stop-color="#d07a30"/><stop offset="1" stop-color="#a85818"/></radialGradient></defs><circle cx="9.5" cy="9.5" r="8.7" fill="url(#bg835)"/><ellipse cx="9.5" cy="5.2" rx="6" ry="3.4" fill="#fff" opacity="0.35"/><path d="M5 9.5L8.3 13L14.2 6" stroke="#fff" stroke-width="2.4" fill="none" stroke-linecap="round" stroke-linejoin="round"/></svg>
<svg class="a" style="left:912px;top:383px;" width="19" height="19" viewBox="0 0 19 19"><defs><radialGradient id="bg912" cx="0.45" cy="0.3" r="0.75"><stop offset="0" stop-color="#f07880"/><stop offset="0.6" stop-color="#d02838"/><stop offset="1" stop-color="#a01020"/></radialGradient></defs><circle cx="9.5" cy="9.5" r="8.7" fill="url(#bg912)"/><ellipse cx="9.5" cy="5.2" rx="6" ry="3.4" fill="#fff" opacity="0.35"/><path d="M6 6L13 13M13 6L6 13" stroke="#fff" stroke-width="2.4" fill="none" stroke-linecap="round"/></svg>
<svg class="a" style="left:990px;top:411px;" width="14" height="14"><path d="M3.6 11.6L13.2 2.2M6.9 11.6L13.2 5M10.7 11.6L13.2 8.8" stroke="#f4f6fa" stroke-width="1.2"/><path d="M2.9 10.6L12.8 1.2M6.2 10.6L12.8 4M10 10.6L12.8 7.8" stroke="#7684a4" stroke-width="1.3"/></svg>

<!--TIP-->
<div class="a" style="left:423px;top:584px;width:222px;height:42px;border:1px solid #3a3a3a;border-radius:10px;background:#ececec;"></div>
<span class="t" style="left:441px;top:589px;letter-spacing:0.07px;">Lo schermo si chiude quando</span>
<span class="t" style="left:441px;top:605px;letter-spacing:0.05px;">l'ultima finestra è chiusa.</span>
<svg class="a" style="left:418px;top:582px;" width="20" height="28" viewBox="0 0 20 28"><path d="M4 4.2L4 21L8 18L11 24.6L14 23.2L11 17L16 16.8Z" fill="#000" opacity="0.28"/><path d="M2.5 2.2L2.5 20.3L6.8 16.4L9.7 22.8L12.4 21.6L9.6 15.5L14.6 15.2Z" fill="#fff" stroke="#000" stroke-width="1.2" stroke-linejoin="round"/></svg>

<!--DOCK-->
<svg class="a" style="left:317px;top:720.5px;" width="44" height="44" viewBox="0 0 44 44">
<defs><linearGradient id="tg19" x1="0" y1="0" x2="0" y2="1"><stop offset="0" stop-color="#f6f6f6"/><stop offset="0.12" stop-color="#e9e9e9"/><stop offset="0.8" stop-color="#e0e0e0"/><stop offset="1" stop-color="#c2c4c8"/></linearGradient>
<linearGradient id="rg20" x1="0.15" y1="0.1" x2="0.85" y2="0.9"><stop offset="0" stop-color="#5c6066"/><stop offset="0.5" stop-color="#70757b"/><stop offset="1" stop-color="#a2a6ac"/></linearGradient></defs>
<rect x="1" y="1.6" width="42.4" height="42" rx="7" ry="7" fill="#0a2a5c" opacity="0.35"/>
<rect x="0.5" y="0.5" width="43" height="42" rx="7" ry="7" fill="url(#tg19)" stroke="#d6d6d6"/>
<path d="M2 8Q2 2 8 2H36Q42 2 42 8" stroke="#ffffff" stroke-width="1.2" fill="none" opacity="0.9"/>
<circle cx="22" cy="21.5" r="17.2" fill="url(#rg20)"/>
<circle cx="22" cy="21.5" r="14.3" fill="#2f3fc4"/><path d="M8.5 19Q22 2 35.5 19Q22 13 8.5 19Z" fill="#6a78e8" opacity="0.7"/>
<path d="M22 11L23.6 19.5L31 21.5L23.6 23.5L22 32L20.4 23.5L13 21.5L20.4 19.5Z" fill="#f4f4ff"/>
<path d="M15.5 15L21 20.5L20 21.5ZM28.5 28L23 22.5L24 21.5ZM15.5 28L21 22.5L22 23.5ZM28.5 15L23 20.5L22 19.5Z" fill="#c8d0ff"/>
<path d="M31 9.5L23.5 23L20.5 20.5Z" fill="#e8482c"/><path d="M12.5 33L20.5 20.5L23.5 23Z" fill="#fff"/>
<circle cx="22" cy="21.5" r="14.3" fill="none" stroke="#3a3e44" stroke-width="0.7" opacity="0.6"/>
</svg>
<svg class="a" style="left:375px;top:720.5px;" width="44" height="44" viewBox="0 0 44 44">
<defs><linearGradient id="tg21" x1="0" y1="0" x2="0" y2="1"><stop offset="0" stop-color="#f6f6f6"/><stop offset="0.12" stop-color="#e9e9e9"/><stop offset="0.8" stop-color="#e0e0e0"/><stop offset="1" stop-color="#c2c4c8"/></linearGradient>
<linearGradient id="rg22" x1="0.15" y1="0.1" x2="0.85" y2="0.9"><stop offset="0" stop-color="#5c6066"/><stop offset="0.5" stop-color="#70757b"/><stop offset="1" stop-color="#a2a6ac"/></linearGradient></defs>
<rect x="1" y="1.6" width="42.4" height="42" rx="7" ry="7" fill="#0a2a5c" opacity="0.35"/>
<rect x="0.5" y="0.5" width="43" height="42" rx="7" ry="7" fill="url(#tg21)" stroke="#d6d6d6"/>
<path d="M2 8Q2 2 8 2H36Q42 2 42 8" stroke="#ffffff" stroke-width="1.2" fill="none" opacity="0.9"/>
<circle cx="22" cy="21.5" r="17.2" fill="url(#rg22)"/>
<circle cx="22" cy="21.5" r="14.3" fill="#8cd0f0"/><path d="M8.5 26Q22 40 35.5 26Z" fill="#c8ecfa"/>
<rect x="11" y="19.5" width="22" height="10.5" fill="#a01818"/><rect x="11" y="19.5" width="22" height="2" fill="#c83030"/>
<text x="22" y="29" font-family="Liberation Sans, sans-serif" font-weight="bold" font-size="10" text-anchor="middle" fill="#fff" textLength="19" lengthAdjust="spacingAndGlyphs">Tube</text>
<text x="22" y="19" font-family="Liberation Sans, sans-serif" font-weight="bold" font-size="11" text-anchor="middle" fill="#101010" textLength="21" lengthAdjust="spacingAndGlyphs">YoU</text>
<circle cx="22.5" cy="14.5" r="5.2" fill="#3ca030"/><circle cx="22.5" cy="13.5" r="4" fill="#6cd050" opacity="0.7"/><path d="M20.8 11.8L25.5 14.5L20.8 17.2Z" fill="#fff"/>
<circle cx="22" cy="21.5" r="14.3" fill="none" stroke="#3a3e44" stroke-width="0.7" opacity="0.6"/>
</svg>
<svg class="a" style="left:433px;top:720.5px;" width="44" height="44" viewBox="0 0 44 44">
<defs><linearGradient id="tg23" x1="0" y1="0" x2="0" y2="1"><stop offset="0" stop-color="#f6f6f6"/><stop offset="0.12" stop-color="#e9e9e9"/><stop offset="0.8" stop-color="#e0e0e0"/><stop offset="1" stop-color="#c2c4c8"/></linearGradient>
<linearGradient id="rg24" x1="0.15" y1="0.1" x2="0.85" y2="0.9"><stop offset="0" stop-color="#5c6066"/><stop offset="0.5" stop-color="#70757b"/><stop offset="1" stop-color="#a2a6ac"/></linearGradient></defs>
<rect x="1" y="1.6" width="42.4" height="42" rx="7" ry="7" fill="#0a2a5c" opacity="0.35"/>
<rect x="0.5" y="0.5" width="43" height="42" rx="7" ry="7" fill="url(#tg23)" stroke="#d6d6d6"/>
<path d="M2 8Q2 2 8 2H36Q42 2 42 8" stroke="#ffffff" stroke-width="1.2" fill="none" opacity="0.9"/>
<circle cx="22" cy="21.5" r="17.2" fill="url(#rg24)"/>
<circle cx="22" cy="21.5" r="14.3" fill="#7a1a9a"/><path d="M8.2 22Q9 9 22 7.5Q12 12 12 26Q12 31 15 34Q8 30 8.2 22Z" fill="#e4c8f0" opacity="0.85"/>
<path d="M19.5 10.5H24.5V21H30.5L22 32L13.5 21H19.5Z" fill="#fff"/>
<circle cx="22" cy="21.5" r="14.3" fill="none" stroke="#3a3e44" stroke-width="0.7" opacity="0.6"/>
</svg>
<svg class="a" style="left:491px;top:720.5px;" width="44" height="44" viewBox="0 0 44 44">
<defs><linearGradient id="tg25" x1="0" y1="0" x2="0" y2="1"><stop offset="0" stop-color="#f6f6f6"/><stop offset="0.12" stop-color="#e9e9e9"/><stop offset="0.8" stop-color="#e0e0e0"/><stop offset="1" stop-color="#c2c4c8"/></linearGradient>
<linearGradient id="rg26" x1="0.15" y1="0.1" x2="0.85" y2="0.9"><stop offset="0" stop-color="#5c6066"/><stop offset="0.5" stop-color="#70757b"/><stop offset="1" stop-color="#a2a6ac"/></linearGradient></defs>
<rect x="1" y="1.6" width="42.4" height="42" rx="7" ry="7" fill="#0a2a5c" opacity="0.35"/>
<rect x="0.5" y="0.5" width="43" height="42" rx="7" ry="7" fill="url(#tg25)" stroke="#d6d6d6"/>
<path d="M2 8Q2 2 8 2H36Q42 2 42 8" stroke="#ffffff" stroke-width="1.2" fill="none" opacity="0.9"/>
<circle cx="22" cy="21.5" r="17.2" fill="url(#rg26)"/>
<circle cx="22" cy="21.5" r="14.3" fill="#2a8ce0"/><path d="M8.5 19Q22 2 35.5 19Q22 12 8.5 19Z" fill="#7cc8f8" opacity="0.7"/>
<path d="M13 35Q11 22 15 15Q19 9 26 11Q30 12 30 16L32 22L30.5 23L30 27Q28 29 25 28L24 33Q18 37 13 35Z" fill="#c89a7e"/>
<path d="M12.5 30Q10 20 15 14Q19 8.5 27 11Q29 12 29.5 14Q24 13 22 17Q21 22 18 24Q16 27 17 32Z" fill="#4a3324"/>
<circle cx="22" cy="21.5" r="14.3" fill="none" stroke="#3a3e44" stroke-width="0.7" opacity="0.6"/>
</svg>
<svg class="a" style="left:549px;top:720.5px;" width="44" height="44" viewBox="0 0 44 44">
<defs><linearGradient id="tg27" x1="0" y1="0" x2="0" y2="1"><stop offset="0" stop-color="#f6f6f6"/><stop offset="0.12" stop-color="#e9e9e9"/><stop offset="0.8" stop-color="#e0e0e0"/><stop offset="1" stop-color="#c2c4c8"/></linearGradient>
<linearGradient id="rg28" x1="0.15" y1="0.1" x2="0.85" y2="0.9"><stop offset="0" stop-color="#5c6066"/><stop offset="0.5" stop-color="#70757b"/><stop offset="1" stop-color="#a2a6ac"/></linearGradient></defs>
<rect x="1" y="1.6" width="42.4" height="42" rx="7" ry="7" fill="#0a2a5c" opacity="0.35"/>
<rect x="0.5" y="0.5" width="43" height="42" rx="7" ry="7" fill="url(#tg27)" stroke="#d6d6d6"/>
<path d="M2 8Q2 2 8 2H36Q42 2 42 8" stroke="#ffffff" stroke-width="1.2" fill="none" opacity="0.9"/>
<circle cx="22" cy="21.5" r="17.2" fill="url(#rg28)"/>
<circle cx="22" cy="21.5" r="14.3" fill="#2a9cec"/><path d="M8.5 19Q22 2 35.5 19Q22 12 8.5 19Z" fill="#8ad4fa" opacity="0.8"/>
<path d="M13 14Q13 11 16 11H28Q31 11 31 14V28H13Z" fill="#8c9096"/><circle cx="22" cy="20" r="7.5" fill="#3a3e44"/><circle cx="22" cy="20" r="5.5" fill="#c8ccd0"/><circle cx="22" cy="20" r="3.2" fill="#f4f4f4"/>
<path d="M22 23V28" stroke="#444" stroke-width="1.2"/><rect x="14" y="28" width="16" height="2" fill="#d8e8f0"/><path d="M19.5 28.5L22 25.5L24.5 28.5Z" fill="#e8b020"/>
<circle cx="22" cy="21.5" r="14.3" fill="none" stroke="#3a3e44" stroke-width="0.7" opacity="0.6"/>
</svg>
<svg class="a" style="left:607px;top:720.5px;" width="44" height="44" viewBox="0 0 44 44">
<defs><linearGradient id="tg29" x1="0" y1="0" x2="0" y2="1"><stop offset="0" stop-color="#f6f6f6"/><stop offset="0.12" stop-color="#e9e9e9"/><stop offset="0.8" stop-color="#e0e0e0"/><stop offset="1" stop-color="#c2c4c8"/></linearGradient>
<linearGradient id="rg30" x1="0.15" y1="0.1" x2="0.85" y2="0.9"><stop offset="0" stop-color="#5c6066"/><stop offset="0.5" stop-color="#70757b"/><stop offset="1" stop-color="#a2a6ac"/></linearGradient></defs>
<rect x="1" y="1.6" width="42.4" height="42" rx="7" ry="7" fill="#0a2a5c" opacity="0.35"/>
<rect x="0.5" y="0.5" width="43" height="42" rx="7" ry="7" fill="url(#tg29)" stroke="#d6d6d6"/>
<path d="M2 8Q2 2 8 2H36Q42 2 42 8" stroke="#ffffff" stroke-width="1.2" fill="none" opacity="0.9"/>
<circle cx="22" cy="21.5" r="17.2" fill="url(#rg30)"/>
<circle cx="22" cy="21.5" r="14.3" fill="#2a6cd0"/><path d="M8.5 19Q22 2 35.5 19Q22 12 8.5 19Z" fill="#6ab4f4" opacity="0.7"/>
<rect x="10" y="13" width="24" height="17" rx="3" fill="#c41818"/><path d="M12 18L28 12.5" stroke="#f4f4f4" stroke-width="1.6"/>
<rect x="8.5" y="18.5" width="27" height="8" fill="#242008"/>
<text x="22" y="25.5" font-family="Liberation Sans, sans-serif" font-weight="bold" font-size="8" text-anchor="middle" fill="#f0e020" textLength="23" lengthAdjust="spacingAndGlyphs">RADIO</text>
<path d="M15 28.5H18M20.5 28.5H23.5M26 28.5H29" stroke="#f0d0d0" stroke-width="1.4"/>
<circle cx="22" cy="21.5" r="14.3" fill="none" stroke="#3a3e44" stroke-width="0.7" opacity="0.6"/>
</svg>
<svg class="a" style="left:665px;top:720.5px;" width="44" height="44" viewBox="0 0 44 44">
<defs><linearGradient id="tg31" x1="0" y1="0" x2="0" y2="1"><stop offset="0" stop-color="#f6f6f6"/><stop offset="0.12" stop-color="#e9e9e9"/><stop offset="0.8" stop-color="#e0e0e0"/><stop offset="1" stop-color="#c2c4c8"/></linearGradient>
<radialGradient id="gl32" cx="0.4" cy="0.3" r="0.8"><stop offset="0" stop-color="#a8d4fa"/><stop offset="0.5" stop-color="#3a7ee0"/><stop offset="1" stop-color="#1a48b0"/></radialGradient></defs>
<rect x="1" y="1.6" width="42.4" height="42" rx="7" ry="7" fill="#0a2a5c" opacity="0.35"/>
<rect x="0.5" y="0.5" width="43" height="42" rx="7" ry="7" fill="url(#tg31)" stroke="#d6d6d6"/>
<circle cx="22" cy="15" r="12.5" fill="url(#gl32)"/><path d="M14 9Q20 5 27 8Q24 12 18 11Z" fill="#d4ecff" opacity="0.8"/>
<rect x="5.5" y="17.5" width="15" height="11" fill="#4a9cf0" stroke="#e8f0fa" stroke-width="1.4"/><rect x="23.5" y="17.5" width="15" height="11" fill="#4a9cf0" stroke="#e8f0fa" stroke-width="1.4"/>
<rect x="7" y="19" width="12" height="4" fill="#9cd0fa" opacity="0.8"/><rect x="25" y="19" width="12" height="4" fill="#9cd0fa" opacity="0.8"/>
<path d="M13 29V33M31 29V33M22 27V33" stroke="#b8bcc4" stroke-width="1.6"/><path d="M8 33.5H36" stroke="#a8acb4" stroke-width="2"/>
<rect x="19.5" y="31" width="5" height="6" fill="#f0a020" stroke="#c87808" stroke-width="0.6"/>
</svg>

</div><!--END-->
</body>
</html>
